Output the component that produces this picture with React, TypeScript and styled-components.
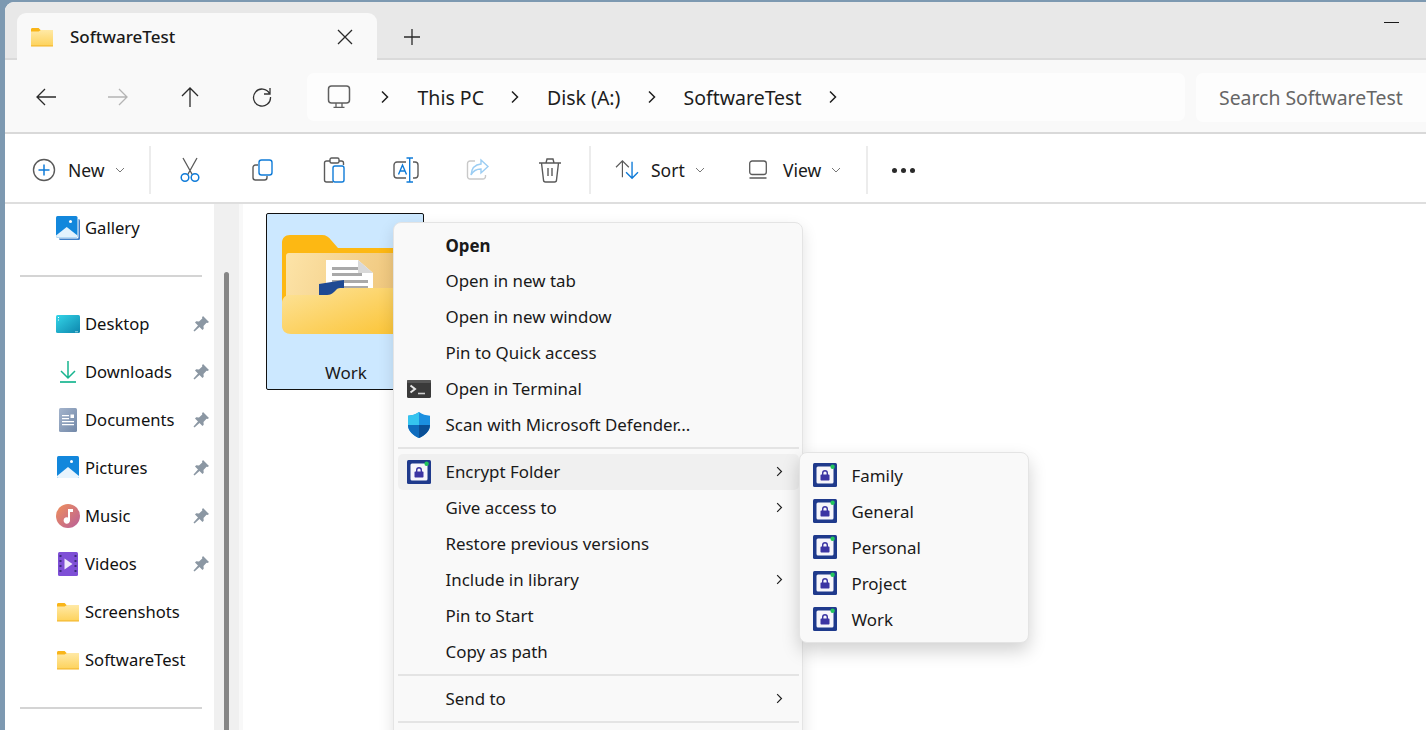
import React from 'react';
import styled, { createGlobalStyle } from 'styled-components';

const GlobalStyle = createGlobalStyle`
  html, body { margin: 0; padding: 0; height: 100%; overflow: hidden; }
  body { background: #7d99b1; font-family: "Noto Sans", "Open Sans", sans-serif; color: #1a1a1a; }
  svg { display: block; flex: none; }
`;

const FolderSmall = ({ size = 24 }: { size?: number }) => (
  <svg width={size} height={size} viewBox="0 0 24 24">
    <defs>
      <linearGradient id="folderFront" x1="0" y1="0" x2="0" y2="1">
        <stop offset="0" stopColor="#ffe9a6" />
        <stop offset="1" stopColor="#fdd25a" />
      </linearGradient>
    </defs>
    <path d="M1 4.5C1 3.7 1.6 3 2.4 3h6.2l2.4 2.4h12v3H1z" fill="#f9b519" />
    <path d="M1 6.4h7.6L11 5h12v15.4c0 .5-.4.9-.9.9H1.9c-.5 0-.9-.4-.9-.9z" fill="url(#folderFront)" />
    <rect x="1" y="20.4" width="22" height="1" fill="#f3b52c" />
  </svg>
);

const FolderLarge = () => (
  <svg width="126" height="100" viewBox="0 0 126 100">
    <defs>
      <linearGradient id="bigInner" x1="0" y1="0" x2="1" y2="0.2">
        <stop offset="0" stopColor="#fde4a8" />
        <stop offset="1" stopColor="#efc67c" />
      </linearGradient>
      <linearGradient id="bigFront" x1="0" y1="0" x2="1" y2="1">
        <stop offset="0" stopColor="#fde39a" />
        <stop offset="1" stopColor="#fbc332" />
      </linearGradient>
    </defs>
    <path d="M0 8C0 3 3 0 8 0h32c4 0 7 2 9 5l7 8h62c4 0 8 3 8 8v70H0z" fill="#fdb813" />
    <path d="M4 21c0-2 1-3 3-3h115v60H4z" fill="url(#bigInner)" />
    <path d="M44 25h32l15 13v30H44z" fill="#fff" />
    <path d="M76 25v13h15z" fill="#d9d9d9" />
    <path d="M50 32h26v3H50zM50 38h30v3H50zM50 45h36v3H50zM50 51h36v3H50z" fill="#a9a9a9" />
    <path d="M37 49l25-4v18H37z" fill="#1f4a93" />
    <path d="M0 68c0-4 3-8 7-8h38c3 0 5-1 7-3l3-3c1-1 3-1 4-1h67v46H9c-5 0-9-3-9-8z" fill="url(#bigFront)" />
  </svg>
);

const LockIcon = () => (
  <svg width="24" height="24" viewBox="0 0 24 24">
    <rect width="24" height="24" rx="1.5" fill="#1f3a8c" />
    <rect x="3.5" y="3.5" width="17" height="17" rx="1.5" fill="#f7f6fb" />
    <path d="M9 11.500V10a3 3 0 0 1 6 0v1.500h.8c.4 0 .7.3.7.7v4.600c0 .4-.3.7-.7.7H8.200c-.4 0-.7-.3-.7-.7v-4.600c0-.4.3-.7.7-.7zm1.400 0h3.200V10a1.600 1.600 0 0 0-3.200 0z" fill="#3c35a3" />
    <circle cx="19.600" cy="3.800" r="2.200" fill="#22c55e" />
  </svg>
);

const TerminalIcon = () => (
  <svg width="24" height="24" viewBox="0 0 24 24">
    <rect y="3" width="24" height="18" rx="1.5" fill="#3a3a3a" />
    <rect y="3" width="24" height="3" rx="1" fill="#565656" />
    <path d="M3.5 8.5l4.5 3.5-4.5 3.5" fill="none" stroke="#e6e6e6" strokeWidth="2" />
    <path d="M11 16.5h7" stroke="#d0d0d0" strokeWidth="1.6" />
  </svg>
);

const ShieldIcon = () => (
  <svg width="24" height="26" viewBox="0 0 24 26">
    <path d="M12 0c3 2.400 7 3.500 11 3.700V13c0 6-5 10.500-11 13C6 23.500 1 19 1 13V3.700C5 3.500 9 2.400 12 0z" fill="#1b8fe0" />
    <path d="M12 0c-3 2.400-7 3.500-11 3.700V13h11z" fill="#35c4ef" />
    <path d="M12 13H1c0 6 5 10.500 11 13z" fill="#0f6cbd" />
    <path d="M12 13h11c0 6-5 10.500-11 13z" fill="#0a4f96" />
  </svg>
);

const Chevron = ({ size = 14 }: { size?: number }) => (
  <svg width={size} height={size} viewBox="0 0 14 14">
    <path d="M4 1.500L9.500 7 4 12.500" fill="none" stroke="#1f1f1f" strokeWidth="1.500" />
  </svg>
);

const CaretDown = () => (
  <svg width="10" height="10" viewBox="0 0 10 10">
    <path d="M1 3l4 4 4-4" fill="none" stroke="#777" strokeWidth="1" />
  </svg>
);

const PinIcon = () => (
  <svg width="16" height="16" viewBox="0 0 16 16">
    <path d="M10 0l6 6-1.500 1-1-.3-3 3.300.2 2.800-1.200 1.200-3-3L1.500 15.500.5 14.500 5 9.500l-3-3 1.200-1.200 2.800.2 3.300-3-.3-1z" fill="#8b97a3" />
  </svg>
);

const NavIcon = ({ d, color = '#2a2a2a' }: { d: string; color?: string }) => (
  <svg width="24" height="24" viewBox="0 0 24 24">
    <path d={d} fill="none" stroke={color} strokeWidth="1.300" />
  </svg>
);

const grey = '#5a5a5a';
const blue = '#0f7bd8';

const CutIcon = () => (
  <svg width="24" height="26" viewBox="0 0 24 26">
    <path d="M5 1l9.500 17M19 1L9.500 18" fill="none" stroke={grey} strokeWidth="1.300" />
    <circle cx="7" cy="20.500" r="3.800" fill="none" stroke={blue} strokeWidth="1.500" />
    <circle cx="17" cy="20.500" r="3.800" fill="none" stroke={blue} strokeWidth="1.500" />
  </svg>
);

const CopyIcon = () => (
  <svg width="24" height="24" viewBox="0 0 24 24">
    <path d="M8 7H5.500A2.500 2.500 0 0 0 3 9.500v10A2.500 2.500 0 0 0 5.500 22h9a2.500 2.500 0 0 0 2.500-2.500V18" fill="none" stroke={grey} strokeWidth="1.400" />
    <rect x="9" y="2" width="13" height="15" rx="2.500" fill="none" stroke={blue} strokeWidth="1.400" />
  </svg>
);

const PasteIcon = () => (
  <svg width="24" height="26" viewBox="0 0 24 26">
    <path d="M8 4H4.500A2 2 0 0 0 2.500 6v17A2 2 0 0 0 4.500 25H11M17 4h2.500a2 2 0 0 1 2 2v2" fill="none" stroke={grey} strokeWidth="1.400" />
    <rect x="8" y="1" width="9" height="5" rx="1.500" fill="none" stroke={grey} strokeWidth="1.400" />
    <rect x="11" y="9" width="11" height="16" rx="2" fill="none" stroke={blue} strokeWidth="1.400" />
  </svg>
);

const RenameIcon = () => (
  <svg width="26" height="26" viewBox="0 0 26 26">
    <path d="M13 5H4a3 3 0 0 0-3 3v10a3 3 0 0 0 3 3h9M20 5h2a3 3 0 0 1 3 3v10a3 3 0 0 1-3 3h-2" fill="none" stroke={grey} strokeWidth="1.400" />
    <path d="M5.500 17.500L9.500 8l4 9.500M7 14h5" fill="none" stroke={blue} strokeWidth="1.400" />
    <path d="M13.500 1h6.500M13.500 25h6.500M16.700 1v24" fill="none" stroke={blue} strokeWidth="1.400" />
  </svg>
);

const ShareIcon = () => (
  <svg width="24" height="24" viewBox="0 0 24 24">
    <path d="M9 3H4a2.500 2.500 0 0 0-2.500 2.500v13A2.500 2.500 0 0 0 4 21h13a2.500 2.500 0 0 0 2.500-2.500V17" fill="none" stroke="#c9c9c9" strokeWidth="1.400" />
    <path d="M15 2l7 6.500-7 6.500v-4C10 11 7 13 5 17c.5-6 4-10.500 10-11z" fill="none" stroke="#9bcdf3" strokeWidth="1.400" />
  </svg>
);

const TrashIcon = () => (
  <svg width="24" height="26" viewBox="0 0 24 26">
    <path d="M1 6h22M8 6l1-4h6l1 4M3.500 6l2 17a2 2 0 0 0 2 2h9a2 2 0 0 0 2-2l2-17M10 11v8M14 11v8" fill="none" stroke={grey} strokeWidth="1.400" />
  </svg>
);

const SortIcon = () => (
  <svg width="24" height="22" viewBox="0 0 26 24">
    <path d="M1 9l7-7 7 7M8 2v18" fill="none" stroke={grey} strokeWidth="1.300" />
    <path d="M12 14.500l6.500 6.500 6.500-6.500M18.500 21V3" fill="none" stroke={blue} strokeWidth="1.500" />
  </svg>
);

const ViewIcon = () => (
  <svg width="20" height="20" viewBox="0 0 20 20">
    <rect x="1.700" y="1" width="16.600" height="13.500" rx="2.500" fill="none" stroke={grey} strokeWidth="1.300" />
    <path d="M1.500 18h17" stroke={grey} strokeWidth="1.400" />
  </svg>
);

const NewIcon = () => (
  <svg width="24" height="24" viewBox="0 0 24 24">
    <circle cx="12" cy="12" r="10.500" fill="none" stroke={grey} strokeWidth="1.400" />
    <path d="M12 6.500v11M6.500 12h11" stroke={blue} strokeWidth="1.500" />
  </svg>
);

const MonitorIcon = () => (
  <svg width="24" height="24" viewBox="0 0 24 24">
    <rect x="1.500" y="1" width="21" height="17" rx="3" fill="none" stroke="#5f5f5f" strokeWidth="1.500" />
    <path d="M9 18v4M15 18v4M6.500 22.300h11" stroke="#5f5f5f" strokeWidth="1.300" />
  </svg>
);

const GalleryIcon = () => (
  <svg width="24" height="24" viewBox="0 0 24 24">
    <rect x="3" y="3" width="21" height="21" rx="1.500" fill="#3f7fc9" />
    <rect x="0" y="0" width="22.500" height="22.500" rx="1.500" fill="#fff" />
    <rect x="0" y="0" width="21.500" height="21.500" rx="1.500" fill="#1287dc" />
    <path d="M0 19.500l10.700-8.500 10.800 8.500v.5a1.500 1.500 0 0 1-1.500 1.500H1.500A1.500 1.500 0 0 1 0 20z" fill="#e3f2fd" />
    <circle cx="14.500" cy="5.500" r="1.500" fill="#fff" />
  </svg>
);

const DesktopIcon = () => (
  <svg width="24" height="24" viewBox="0 0 24 24">
    <defs>
      <linearGradient id="desk" x1="0" y1="0" x2="1" y2="1">
        <stop offset="0" stopColor="#34d5e8" />
        <stop offset="1" stopColor="#0d86ad" />
      </linearGradient>
    </defs>
    <rect y="3" width="24" height="18" rx="1.500" fill="url(#desk)" />
    <path d="M2 5h1v1H2zM2 7.500h1v1H2z" fill="#fff" />
    <path d="M19 19.500h3v.7h-3z" fill="#d5f3f8" />
  </svg>
);

const DownloadIcon = () => (
  <svg width="24" height="24" viewBox="0 0 24 24">
    <path d="M12 1v17M5 11l7 7 7-7" fill="none" stroke="#17b58f" strokeWidth="1.500" />
    <path d="M4 22h16" stroke="#17b58f" strokeWidth="1.700" />
  </svg>
);

const DocumentsIcon = () => (
  <svg width="24" height="24" viewBox="0 0 24 24">
    <defs>
      <linearGradient id="docs" x1="0" y1="0" x2="1" y2="1">
        <stop offset="0" stopColor="#a4b4cc" />
        <stop offset="1" stopColor="#7288a8" />
      </linearGradient>
    </defs>
    <rect x="3" y="0" width="18" height="24" rx="1.500" fill="url(#docs)" />
    <path d="M6 7h7v1.200H6zM6 10h7v1.200H6zM6 13h12v1.200H6zM6 16h12v1.200H6z" fill="#fff" />
    <rect x="14.500" y="6.500" width="3.500" height="3.500" fill="#fff" />
  </svg>
);

const PicturesIcon = () => (
  <svg width="24" height="24" viewBox="0 0 24 24">
    <rect x="1" y="0" width="22" height="22" rx="1.500" fill="#1287dc" />
    <path d="M1 20l11-9 11 9v.5a1.500 1.500 0 0 1-1.500 1.500h-19A1.500 1.500 0 0 1 1 20.500z" fill="#e8f4fd" />
    <circle cx="15.500" cy="5.500" r="1.500" fill="#fff" />
  </svg>
);

const MusicIcon = () => (
  <svg width="24" height="24" viewBox="0 0 24 24">
    <defs>
      <linearGradient id="music" x1="0" y1="0" x2="1" y2="1">
        <stop offset="0" stopColor="#f0905a" />
        <stop offset="1" stopColor="#b85f9a" />
      </linearGradient>
    </defs>
    <circle cx="12" cy="12" r="12" fill="url(#music)" />
    <path d="M12 5h5v3h-3v8.500a3.200 3.200 0 1 1-2-3z" fill="#fff" />
  </svg>
);

const VideosIcon = () => (
  <svg width="24" height="24" viewBox="0 0 24 24">
    <rect x="2" y="0" width="20" height="24" rx="1.500" fill="#7e4fd6" />
    <path d="M3.500 3h2v2h-2zM3.500 8h2v2h-2zM3.500 13h2v2h-2zM3.500 18h2v2h-2zM18.500 3h2v2h-2zM18.500 8h2v2h-2zM18.500 13h2v2h-2zM18.500 18h2v2h-2z" fill="#3c2a7a" />
    <path d="M8.500 6.500l8 5.500-8 5.500z" fill="#efe9fb" />
  </svg>
);

const Window = styled.div`
  margin: 2px 0 0 5px;
  height: 728px;
  background: #fff;
  border-top-left-radius: 9px;
  overflow: hidden;
  display: flex;
  flex-direction: column;
  position: relative;
`;

const TitleBar = styled.div`
  height: 58px;
  flex: none;
  box-sizing: border-box;
  background: #e8e8e8;
  border-bottom: 2px solid #dadada;
  display: flex;
  align-items: flex-start;
  padding-left: 12px;
`;

const Tab = styled.div`
  width: 360px;
  height: 47px;
  margin-top: 11px;
  box-sizing: border-box;
  background: #f9f9f9;
  border-radius: 9px 9px 0 0;
  display: flex;
  align-items: center;
  padding: 0 20px 0 13px;
`;

const TabTitle = styled.span`
  margin-left: 16px;
  font-size: 17px;
  font-weight: 500;
  flex: 1;
`;

const TitleButton = styled.div`
  width: 70px;
  height: 47px;
  margin-top: 11px;
  display: flex;
  align-items: center;
  justify-content: center;
`;

const Minimize = styled.div`
  margin: 20px 27px 0 auto;
  width: 15px;
  height: 1px;
  background: #1a1a1a;
`;

const NavBar = styled.div`
  height: 74px;
  flex: none;
  box-sizing: border-box;
  background: #f9f9f9;
  border-bottom: 2px solid #d9d9d9;
  display: flex;
  align-items: center;
  padding: 2px 0 0 5px;
`;

const NavButton = styled.div`
  width: 72px;
  display: flex;
  justify-content: center;
`;

const AddressBar = styled.div`
  width: 878px;
  height: 48px;
  margin: 0 11px 0 9px;
  flex: none;
  box-sizing: border-box;
  background: #fdfdfd;
  border-radius: 7px;
  display: flex;
  align-items: center;
  gap: 24.500px;
  padding-left: 20px;

  & > svg:first-child {
    margin-right: 2px;
  }

  & > svg:nth-child(2) {
    margin-right: 1.500px;
  }
`;

const Crumb = styled.span`
  font-size: 19.500px;
  color: #1c1c1c;
  white-space: nowrap;
`;

const SearchBox = styled.div`
  flex: 1;
  height: 49px;
  margin-right: -10px;
  box-sizing: border-box;
  background: #fdfdfd;
  border-radius: 7px;
  display: flex;
  align-items: center;
  padding-left: 23px;
  font-size: 19.400px;
  color: #666;
  white-space: nowrap;
`;

const Toolbar = styled.div`
  height: 70px;
  flex: none;
  box-sizing: border-box;
  background: #fff;
  border-bottom: 2px solid #dedede;
  display: flex;
  align-items: center;
  padding: 4px 0 0 9px;
`;

const TextButton = styled.div<{ $width: number; $pad?: number }>`
  width: ${(p) => p.$width}px;
  box-sizing: border-box;
  padding-left: ${(p) => p.$pad ?? 18}px;
  display: flex;
  align-items: center;
  font-size: 17.500px;
`;

const TextLabel = styled.span<{ $gap: number }>`
  margin: 0 10px 0 ${(p) => p.$gap}px;
`;

const IconButton = styled.div<{ $width?: number }>`
  width: ${(p) => p.$width ?? 72}px;
  display: flex;
  justify-content: center;
`;

const ToolbarSep = styled.div<{ $left: number; $right: number }>`
  width: 2px;
  height: 48px;
  margin: 0 ${(p) => p.$right}px 0 ${(p) => p.$left}px;
  background: #ececec;
`;

const Dots = styled.div`
  display: flex;
  gap: 4px;
`;

const Dot = styled.span`
  width: 5px;
  height: 5px;
  border-radius: 50%;
  background: #2a2a2a;
`;

const Body = styled.div`
  flex: 1;
  min-height: 0;
  display: flex;
`;

const Sidebar = styled.div`
  width: 209px;
  flex: none;
  background: #fff;
`;

const NavRow = styled.div`
  height: 48px;
  box-sizing: border-box;
  padding: 0 5px 0 51px;
  display: flex;
  align-items: center;
  font-size: 16.600px;
  color: #111;
`;

const NavLabel = styled.span`
  margin-left: 5px;
  padding-bottom: 2px;
  flex: 1;
  white-space: nowrap;
`;

const NavDivider = styled.div`
  height: 2px;
  margin: 23px 12px 23px 15px;
  background: #d4d4d4;
`;

const Gutter = styled.div`
  width: 25px;
  flex: none;
  background: #f0f0f0;
  padding: 68px 0 0 10px;
  box-sizing: border-box;
`;

const Thumb = styled.div`
  width: 5px;
  height: 100%;
  border-radius: 3px 3px 0 0;
  background: #868686;
`;

const Content = styled.div`
  flex: 1;
  border-left: 4px solid #f8f8f8;
  padding: 9px 0 0 23px;
`;

const Tile = styled.div`
  width: 158px;
  height: 177px;
  box-sizing: border-box;
  border: 1px solid #111;
  border-radius: 2px;
  background: #cce8ff;
  padding-top: 21px;
  display: flex;
  flex-direction: column;
  align-items: center;
`;

const TileLabel = styled.span`
  margin: 26px 0 0 2px;
  font-size: 17px;
`;

const Menu = styled.div<{ $left: number; $top: number; $width: number; $raised?: boolean }>`
  position: absolute;
  left: ${(p) => p.$left}px;
  top: ${(p) => p.$top}px;
  width: ${(p) => p.$width}px;
  box-sizing: border-box;
  padding: 3.500px 3.500px ${(p) => (p.$raised ? 5.5 : 3.5)}px;
  background: #f9f9f9;
  border: 1.500px solid #e4e4e4;
  border-radius: 8px;
  box-shadow: ${(p) =>
    p.$raised ? '0 8px 18px rgba(0, 0, 0, 0.18)' : '0 6px 16px rgba(0, 0, 0, 0.12)'};
`;

const MenuItem = styled.div<{ $active?: boolean; $bold?: boolean; $textLeft: number; $textTop?: number }>`
  height: 36px;
  box-sizing: border-box;
  padding: 0 14px 0 9px;
  border-radius: 5px;
  background: ${(p) => (p.$active ? '#f0f0f0' : 'transparent')};
  font-weight: ${(p) => (p.$bold ? 700 : 400)};
  font-size: 16.900px;
  display: flex;
  align-items: center;
  white-space: nowrap;
  color: #1a1a1a;

  & > span {
    flex: 1;
    padding: ${(p) => p.$textTop ?? 0}px 0 0 ${(p) => p.$textLeft}px;
  }
`;

const IconSlot = styled.div`
  width: 24px;
  display: flex;
  justify-content: center;
  flex: none;
`;

const MenuSep = styled.div`
  height: 1.500px;
  margin: 4.500px 0 5px;
  background: #e4e4e4;
`;

const MenuFoot = styled.div`
  height: 40px;
`;

const places = [
  { label: 'Desktop', icon: <DesktopIcon />, pinned: true },
  { label: 'Downloads', icon: <DownloadIcon />, pinned: true },
  { label: 'Documents', icon: <DocumentsIcon />, pinned: true },
  { label: 'Pictures', icon: <PicturesIcon />, pinned: true },
  { label: 'Music', icon: <MusicIcon />, pinned: true },
  { label: 'Videos', icon: <VideosIcon />, pinned: true },
  { label: 'Screenshots', icon: <FolderSmall />, pinned: false },
  { label: 'SoftwareTest', icon: <FolderSmall />, pinned: false },
];

const firstGroup = [
  { label: 'Open', bold: true },
  { label: 'Open in new tab' },
  { label: 'Open in new window' },
  { label: 'Pin to Quick access' },
  { label: 'Open in Terminal', icon: <TerminalIcon /> },
  { label: 'Scan with Microsoft Defender...', icon: <ShieldIcon /> },
];

const secondGroup = [
  { label: 'Encrypt Folder', icon: <LockIcon />, sub: true, active: true },
  { label: 'Give access to', sub: true },
  { label: 'Restore previous versions' },
  { label: 'Include in library', sub: true },
  { label: 'Pin to Start' },
  { label: 'Copy as path' },
];

type Entry = { label: string; icon?: React.ReactNode; sub?: boolean; active?: boolean; bold?: boolean };

const renderEntry = (e: Entry) => (
  <MenuItem key={e.label} $active={e.active} $bold={e.bold} $textLeft={15} $textTop={e.bold ? 2 : 0}>
    <IconSlot>{e.icon}</IconSlot>
    <span>{e.label}</span>
    {e.sub && <Chevron size={11} />}
  </MenuItem>
);

const App = () => (
  <>
    <GlobalStyle />
    <Window>
      <TitleBar>
        <Tab>
          <FolderSmall />
          <TabTitle>SoftwareTest</TabTitle>
          <NavIcon d="M5 5l14 14M19 5L5 19" />
        </Tab>
        <TitleButton>
          <NavIcon d="M12 4v16M4 12h16" />
        </TitleButton>
        <Minimize />
      </TitleBar>

      <NavBar>
        <NavButton><NavIcon d="M3 12h19M11 4l-8 8 8 8" /></NavButton>
        <NavButton><NavIcon d="M2 12h19M13 4l8 8-8 8" color="#b4b4b4" /></NavButton>
        <NavButton><NavIcon d="M12 3v19M4 11l8-8 8 8" /></NavButton>
        <NavButton>
          <NavIcon d="M19.500 8.500A8.500 8.500 0 1 0 20.500 12M20 3v6h-6" color="#333" />
        </NavButton>
        <AddressBar>
          <MonitorIcon />
          <Chevron />
          <Crumb>This PC</Crumb>
          <Chevron />
          <Crumb>Disk (A:)</Crumb>
          <Chevron />
          <Crumb>SoftwareTest</Crumb>
          <Chevron />
        </AddressBar>
        <SearchBox>Search SoftwareTest</SearchBox>
      </NavBar>

      <Toolbar>
        <TextButton $width={132}>
          <NewIcon />
          <TextLabel $gap={12}>New</TextLabel>
          <CaretDown />
        </TextButton>
        <ToolbarSep $left={3} $right={3} />
        <IconButton><CutIcon /></IconButton>
        <IconButton><CopyIcon /></IconButton>
        <IconButton><PasteIcon /></IconButton>
        <IconButton><RenameIcon /></IconButton>
        <IconButton><ShareIcon /></IconButton>
        <IconButton><TrashIcon /></IconButton>
        <ToolbarSep $left={3} $right={3} />
        <TextButton $width={136} $pad={21}>
          <SortIcon />
          <TextLabel $gap={12}>Sort</TextLabel>
          <CaretDown />
        </TextButton>
        <TextButton $width={133}>
          <ViewIcon />
          <TextLabel $gap={15}>View</TextLabel>
          <CaretDown />
        </TextButton>
        <ToolbarSep $left={3} $right={3} />
        <IconButton $width={64}>
          <Dots><Dot /><Dot /><Dot /></Dots>
        </IconButton>
      </Toolbar>

      <Body>
        <Sidebar>
          <NavRow>
            <GalleryIcon />
            <NavLabel>Gallery</NavLabel>
          </NavRow>
          <NavDivider />
          {places.map((p) => (
            <NavRow key={p.label}>
              {p.icon}
              <NavLabel>{p.label}</NavLabel>
              {p.pinned && <PinIcon />}
            </NavRow>
          ))}
          <NavDivider />
        </Sidebar>
        <Gutter>
          <Thumb />
        </Gutter>
        <Content>
          <Tile>
            <FolderLarge />
            <TileLabel>Work</TileLabel>
          </Tile>
        </Content>
      </Body>

      <Menu $left={388} $top={220} $width={410}>
        {firstGroup.map(renderEntry)}
        <MenuSep />
        {secondGroup.map(renderEntry)}
        <MenuSep />
        {renderEntry({ label: 'Send to', sub: true })}
        <MenuSep />
        <MenuFoot />
      </Menu>

      <Menu $left={794} $top={450} $width={230} $raised>
        {['Family', 'General', 'Personal', 'Project', 'Work'].map((name) => (
          <MenuItem key={name} $textLeft={15} $textTop={2}>
            <IconSlot><LockIcon /></IconSlot>
            <span>{name}</span>
          </MenuItem>
        ))}
      </Menu>
    </Window>
  </>
);

export default App;
